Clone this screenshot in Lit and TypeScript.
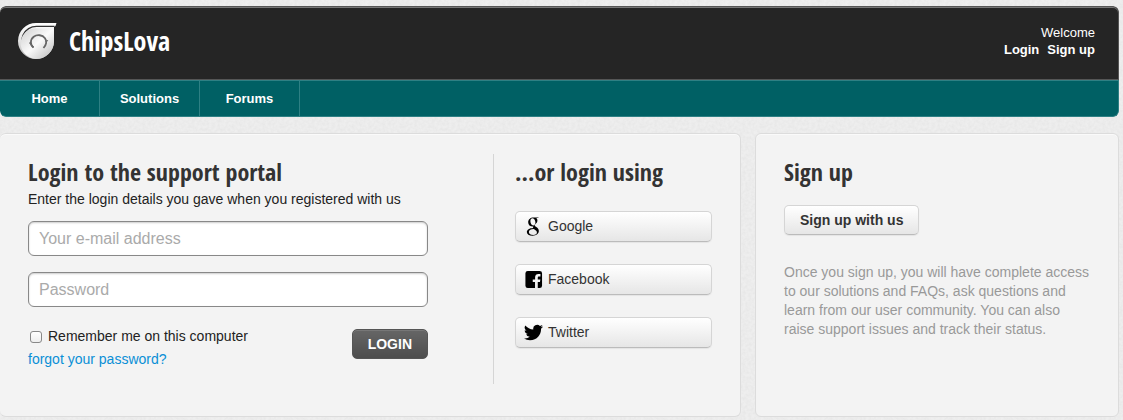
import { LitElement, html, css, svg } from "lit";
import { customElement } from "lit/decorators.js";

const googleIcon = svg`<svg class="icon" viewBox="0 0 20 20" aria-hidden="true">
  <path fill-rule="evenodd" d="M16 .4H10.200C6.500.4 4.400 2.600 4.400 5.400c0 2.700 2 4.600 4.800 4.600h.6c-.3.500-.4.900-.2 1.500-3.800.2-6.600 1.600-6.600 4.300 0 2.300 2.300 3.900 6 3.900 4.300 0 6.600-2.300 6.600-4.900 0-1.900-1-3-2.700-4.200-1.300-.9-1.600-1.200-1.600-1.800 0-.7.500-1.100 1.100-1.600 1-.8 1.700-1.800 1.700-3.400 0-1.300-.5-2.100-1.200-2.700h1.500zM9.100 1.200c1.800 0 2.900 2.300 2.900 4.700 0 1.900-.8 3-2.300 3C7.800 8.900 6.700 6.600 6.700 4.300c0-1.800.8-3.100 2.400-3.100zM10.300 12.600c2.400 1.600 3.300 2.200 3.300 3.700 0 1.500-1.300 2.600-3.900 2.600-2.700 0-4.600-1.200-4.600-3.200 0-2.100 2.200-3.100 5.200-3.100z"/></svg>`;

const facebookIcon = svg`<svg class="icon" viewBox="0 0 20 20" aria-hidden="true">
  <path d="M4 1h12.500A2.500 2.500 0 0 1 19 3.500v13a2.500 2.500 0 0 1-2.500 2.500h-2v-6.400h2.300l.4-2.700h-2.700V8.100c0-.9.300-1.300 1.300-1.300h1.500V4.300c-.4-.1-1.100-.1-2-.1-2.300 0-3.600 1.200-3.600 3.500v2.200H9.200v2.700h2.400V19H4a2.500 2.500 0 0 1-2.500-2.500v-13A2.500 2.500 0 0 1 4 1z"/></svg>`;

const twitterIcon = svg`<svg class="icon" viewBox="0 0 24 24" aria-hidden="true">
  <path d="M23.950 4.570a10 10 0 0 1-2.820.770 4.960 4.960 0 0 0 2.160-2.720 9.900 9.900 0 0 1-3.120 1.190 4.920 4.920 0 0 0-8.380 4.480C7.690 8.090 4.070 6.130 1.640 3.160a4.920 4.920 0 0 0 1.520 6.570 4.900 4.900 0 0 1-2.230-.61v.06a4.920 4.920 0 0 0 3.950 4.830 4.900 4.900 0 0 1-2.210.08 4.940 4.940 0 0 0 4.600 3.420A9.870 9.870 0 0 1 0 19.540a13.940 13.940 0 0 0 7.550 2.210c9.050 0 14-7.500 14-13.980 0-.21 0-.42-.02-.63a9.940 9.940 0 0 0 2.460-2.550z"/></svg>`;

const logo = svg`<svg class="logo" viewBox="0 0 40 38" role="img" aria-label="ChipsLova logo">
  <defs>
    <linearGradient id="shell" x1="0" y1="0" x2="0" y2="1">
      <stop offset="0" stop-color="#fff"/><stop offset=".5" stop-color="#e2e2e2"/><stop offset="1" stop-color="#b5b5b5"/>
    </linearGradient>
    <linearGradient id="core" x1="0" y1="0" x2="1" y2="1">
      <stop offset="0" stop-color="#cfcfcf"/><stop offset=".5" stop-color="#fafafa"/><stop offset="1" stop-color="#b8b8b8"/>
    </linearGradient>
  </defs>
  <path d="M39.500 1H19A18 18 0 1 0 37 19V5l1.500-1z" fill="url(#shell)"/>
  <path d="M37.500 4.300H20A14.800 14.800 0 0 0 9 29.500" fill="none" stroke="#333" stroke-width="1.300"/>
  <path d="M37 6.500V19A18 18 0 0 1 19 37c-3 0-5.500-1-7.500-2.500A15 15 0 0 1 21 6.500z" fill="url(#core)"/>
  <path d="M16.500 25.500c-3.500-2.500-3.500-8 .2-10.800 3.400-2.500 8.800-1.900 11.300 1.500 1.800 2.600 1.500 6.300-1.500 9.800" fill="none" stroke="#666" stroke-width="1.800"/>
  <path d="M12.500 20.500l4 5M31 18.500l-2.500 1" stroke="#666" stroke-width="1.300"/>
</svg>`;

@customElement("app-root")
export class AppRoot extends LitElement {
  static styles = css`
    :host {
      display: block;
      box-sizing: border-box;
      min-height: 100vh;
      padding: 6px 4px 3px 0;
      color: #333;
      font: 14px/19px "Liberation Sans", Arial, sans-serif;
      background: #eee url("data:image/svg+xml,%3Csvg xmlns='http://www.w3.org/2000/svg' width='120' height='120'%3E%3Cfilter id='n'%3E%3CfeTurbulence type='fractalNoise' baseFrequency='.35' numOctaves='2' stitchTiles='stitch'/%3E%3CfeColorMatrix values='0 0 0 0 0 0 0 0 0 0 0 0 0 0 0 .05 0 0 0 -.015'/%3E%3C/filter%3E%3Crect width='120' height='120' filter='url(%23n)'/%3E%3C/svg%3E");
    }
    *, *::before { box-sizing: border-box; }
    h1, h2, p { margin: 0; }
    a { color: inherit; text-decoration: none; }
    h1, h2 {
      font: bold 24px/32px "Open Sans Condensed", "Open Sans", sans-serif;
    }
    h1 { font-size: 26px; }
    .top {
      border-radius: 6px;
      overflow: hidden;
      color: #fff;
    }
    .banner {
      display: flex;
      align-items: center;
      justify-content: space-between;
      height: 74px;
      padding: 0 23px 4px 17px;
      background: #252525;
      border: solid #555;
      border-width: 1px 1px 1px 0;
      border-radius: 6px 6px 0 0;
      box-shadow: inset 0 1px #777;
    }
    .brand { display: flex; align-items: center; gap: 12px; }
    .logo { width: 40px; height: 38px; }
    .account { text-align: right; font-size: 13px; line-height: 17px; }
    .account nav { display: flex; gap: 8px; font-weight: bold; }
    .menu {
      display: flex;
      height: 37px;
      background: #006064;
      border: 1px solid #2e8084;
      border-left: 0;
      border-radius: 0 0 6px 6px;
    }
    .menu a {
      width: 100px;
      border-right: 1px solid #2e8084;
      font-size: 13px;
      line-height: 35px;
      text-align: center;
      font-weight: bold;
    }
    .panels {
      display: grid;
      grid-template-columns: 741fr 364fr;
      gap: 14px;
      margin-top: 16px;
    }
    .panel {
      min-height: 284px;
      padding: 20px 28px 32px;
      background: #f3f3f3;
      border: 1px solid #dcdcdc;
      border-radius: 6px;
      box-shadow: inset 0 1px #fafafa;
    }
    .split { display: flex; border-left: 0; }
    .login {
      flex: 1;
      padding-right: 65px;
      border-right: 1px solid #d5d5d5;
    }
    .login h2, .social h2, .signup h2 { margin-top: 2px; }
    .intro { margin-top: 2px; color: #222; }
    .field {
      display: block;
      width: 100%;
      height: 35px;
      margin: 12px 0 16px;
      padding: 0 10px;
      font: 16px "Liberation Sans", Arial, sans-serif;
      background: #fff;
      border: 1px solid #888;
      border-radius: 6px;
      box-shadow: inset 0 1px 2px #ccc;
    }
    .field::placeholder { color: #aaa; opacity: 1; }
    .actions {
      display: flex;
      justify-content: space-between;
      margin-top: 20px;
    }
    .remember { display: flex; align-items: center; gap: 6px; height: 19px; padding-left: 2px; color: #222; }
    .remember input {
      appearance: none;
      width: 12px;
      height: 12px;
      margin: 0;
      border: 1px solid #888;
      border-radius: 3px;
      background: linear-gradient(#fff, #eee);
    }
    .remember input:checked { background: #0a8fd6; }
    .forgot { display: block; margin-top: 4px; color: #0a8fd6; }
    .button {
      font: bold 14px/28px "Liberation Sans", Arial, sans-serif;
      height: 30px;
      padding: 0 15px;
      color: #333;
      border: 1px solid #d5d5d5;
      border-bottom-color: #bbb;
      border-radius: 5px;
      background: linear-gradient(#fff, #e6e6e6);
      box-shadow: 0 1px 1px #e4e4e4;
    }
    .submit {
      margin-top: 2px;
      color: #fff;
      border-color: #555;
      background: linear-gradient(#666, #4d4d4d);
      box-shadow: inset 0 1px #777;
    }
    .social { width: 218px; padding-left: 21px; }
    .providers { display: grid; gap: 22px; margin-top: 23px; }
    .provider {
      display: flex;
      align-items: center;
      gap: 5px;
      width: 100%;
      height: 31px;
      padding: 0 8px;
      line-height: 27px;
      font-weight: normal;
    }
    .icon { width: 19px; height: 19px; }
    .signup .button { margin-top: 17px; }
    .note { margin-top: 28px; color: #999; }
  `;

  render() {
    return html`
      <header class="top">
        <div class="banner">
          <div class="brand">${logo}<h1>ChipsLova</h1></div>
          <div class="account">
            <div>Welcome</div>
            <nav><a href="#login">Login</a><a href="#signup">Sign up</a></nav>
          </div>
        </div>
        <nav class="menu">
          <a href="#home">Home</a><a href="#solutions">Solutions</a><a href="#forums">Forums</a>
        </nav>
      </header>
      <main class="panels">
        <section class="panel split">
          <form class="login">
            <h2>Login to the support portal</h2>
            <p class="intro">Enter the login details you gave when you registered with us</p>
            <input class="field" type="email" aria-label="Your e-mail address" placeholder="Your e-mail address">
            <input class="field" type="password" aria-label="Password" placeholder="Password">
            <div class="actions">
              <div>
                <label class="remember"><input type="checkbox">Remember me on this computer</label>
                <a class="forgot" href="#forgot">forgot your password?</a>
              </div>
              <button class="button submit" type="button">LOGIN</button>
            </div>
          </form>
          <div class="social">
            <h2>...or login using</h2>
            <div class="providers">
              <button class="button provider">${googleIcon}Google</button>
              <button class="button provider">${facebookIcon}Facebook</button>
              <button class="button provider">${twitterIcon}Twitter</button>
            </div>
          </div>
        </section>
        <section class="panel signup">
          <h2>Sign up</h2>
          <button class="button">Sign up with us</button>
          <p class="note">Once you sign up, you will have complete access to our solutions and FAQs, ask questions and learn from our user community. You can also raise support issues and track their status.</p>
        </section>
      </main>`;
  }
}
